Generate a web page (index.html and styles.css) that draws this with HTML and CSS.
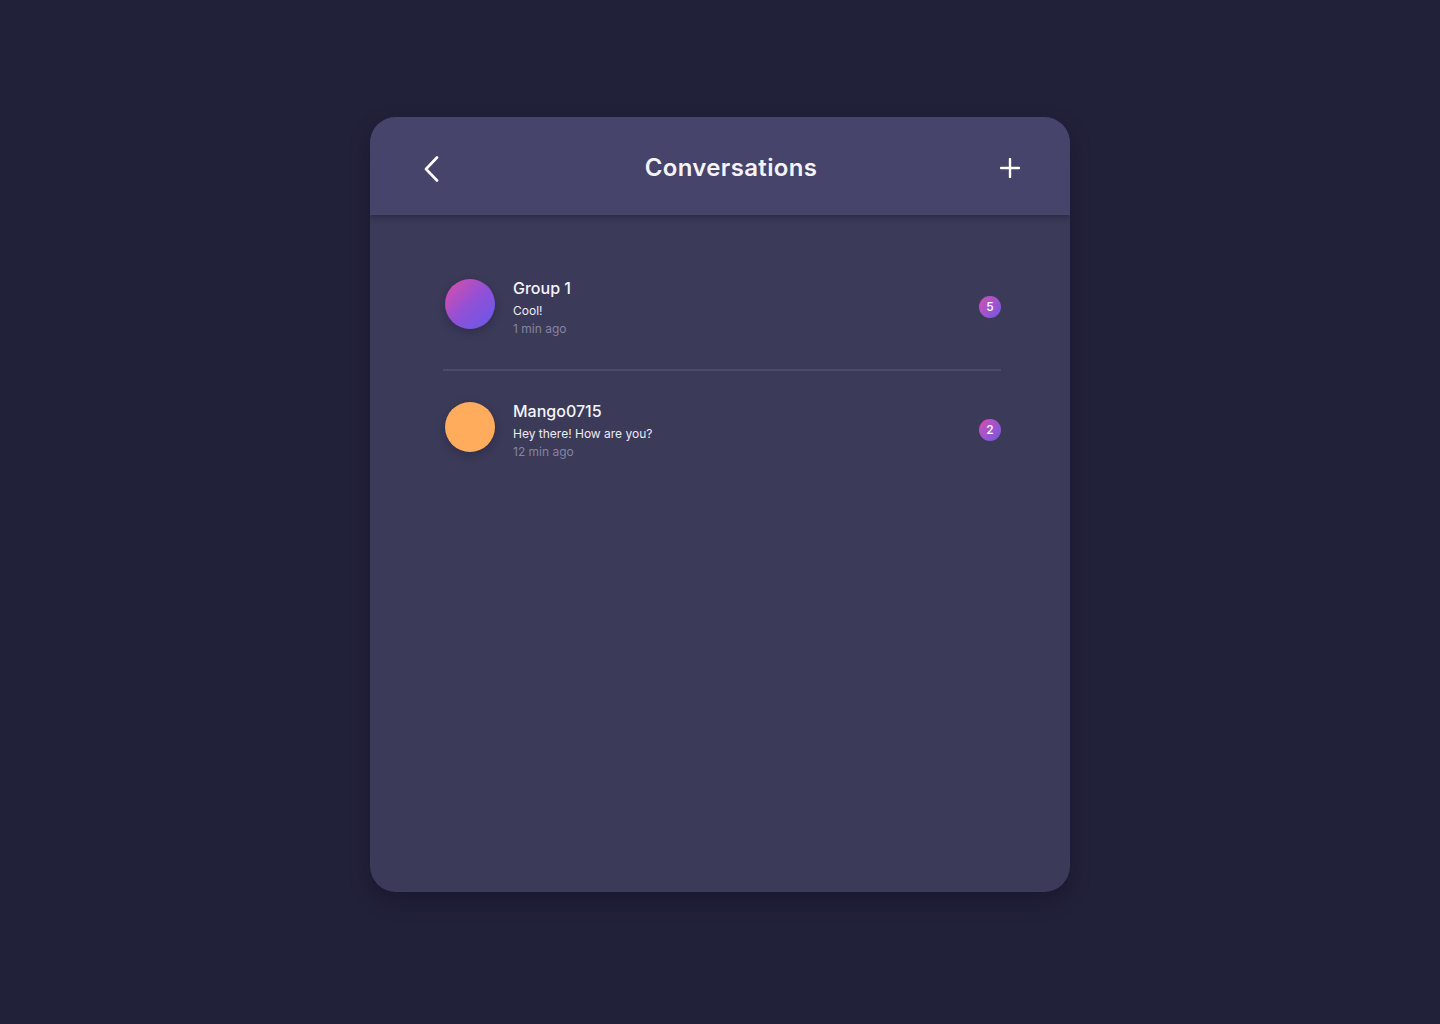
FILE: index.html
```html
<!DOCTYPE html>
<html lang="en">
<head>
<meta charset="utf-8">
<title>Conversations</title>
<link rel="stylesheet" href="styles.css">
</head>
<body>
<div class="page">
  <div class="card">
    <header class="header">
      <button class="icon-btn back" aria-label="Back">
        <svg width="16" height="26" viewBox="0 0 16 26"><path d="M13 1.5 L2 13 L13 24.5" fill="none" stroke="#fff" stroke-width="2.6" stroke-linecap="round" stroke-linejoin="round"/></svg>
      </button>
      <h1 class="title">Conversations</h1>
      <button class="icon-btn add" aria-label="New conversation">
        <svg width="20" height="20" viewBox="0 0 20 20"><path d="M10 1 V19 M1 10 H19" fill="none" stroke="#fff" stroke-width="2.4" stroke-linecap="round"/></svg>
      </button>
    </header>
    <ul class="list">
      <li class="row">
        <div class="avatar avatar-grad"></div>
        <div class="info">
          <div class="name">Group 1</div>
          <div class="msg">Cool!</div>
          <div class="time">1 min ago</div>
        </div>
        <span class="badge">5</span>
      </li>
      <li class="row">
        <div class="avatar avatar-orange"></div>
        <div class="info">
          <div class="name">Mango0715</div>
          <div class="msg">Hey there! How are you?</div>
          <div class="time">12 min ago</div>
        </div>
        <span class="badge">2</span>
      </li>
    </ul>
  </div>
</div>
</body>
</html>
```
FILE: styles.css
```css
* { box-sizing: border-box; }
html, body { margin: 0; padding: 0; }
body {
  background: #22213a;
  font-family: Inter, "Noto Sans", "Liberation Sans", sans-serif;
  color: #f2f1f7;
  min-height: 1024px;
}
.page {
  display: flex;
  justify-content: center;
  padding-top: 117px;
}
.card {
  width: 700px;
  height: 775px;
  background: #3b3a59;
  border-radius: 26px;
  overflow: hidden;
  box-shadow: 0 8px 20px rgba(10, 9, 25, 0.35);
}
.header {
  height: 98px;
  background: #46446a;
  display: grid;
  grid-template-columns: 40px 1fr 40px;
  align-items: center;
  padding: 0 40px 0 50px;
  box-shadow: 0 3px 6px rgba(20, 19, 40, 0.35);
  position: relative;
}
.icon-btn {
  background: none;
  border: 0;
  padding: 0;
  display: flex;
  align-items: center;
  justify-content: center;
  cursor: pointer;
  height: 40px;
}
.back { justify-content: flex-start; padding-left: 4px; padding-top: 6px; }
.add { padding-top: 4px; }
.title {
  margin: 0;
  padding-top: 2px;
  text-align: center;
  font-size: 24px;
  font-weight: 600;
  letter-spacing: 0.35px;
  padding-left: 12px;
  color: #f4f3f8;
}
.list {
  list-style: none;
  margin: 0 69px 0 73px;
  padding: 32px 0 0;
}
.row {
  display: flex;
  align-items: flex-start;
  padding: 32px 0 31px 2px;
}
.row + .row { border-top: 2px solid #4c4b6a; padding-top: 31px; }
.avatar {
  width: 50px;
  height: 50px;
  border-radius: 50%;
  flex: none;
  box-shadow: 0 3px 8px rgba(20, 18, 40, 0.3);
}
.avatar-grad { background: linear-gradient(135deg, #e04fa6 0%, #9150d6 50%, #6659ea 100%); }
.avatar-orange { background: #ffad5c; }
.info {
  margin-left: 18px;
  flex: 1;
}
.name {
  font-size: 16px;
  line-height: 20px;
  font-weight: 500;
  color: #f5f4f9;
  margin-top: -1px;
}
.msg {
  font-size: 12px;
  line-height: 18px;
  margin-top: 4px;
  color: #ecebf3;
}
.time {
  font-size: 12px;
  line-height: 18px;
  color: #85849f;
}
.badge {
  align-self: center;
  width: 22px;
  height: 22px;
  border-radius: 50%;
  background: linear-gradient(135deg, #d64fb0 0%, #7058e6 100%);
  color: #fff;
  font-size: 12px;
  font-weight: 500;
  display: flex;
  align-items: center;
  justify-content: center;
  margin-top: -4px;
}
```
